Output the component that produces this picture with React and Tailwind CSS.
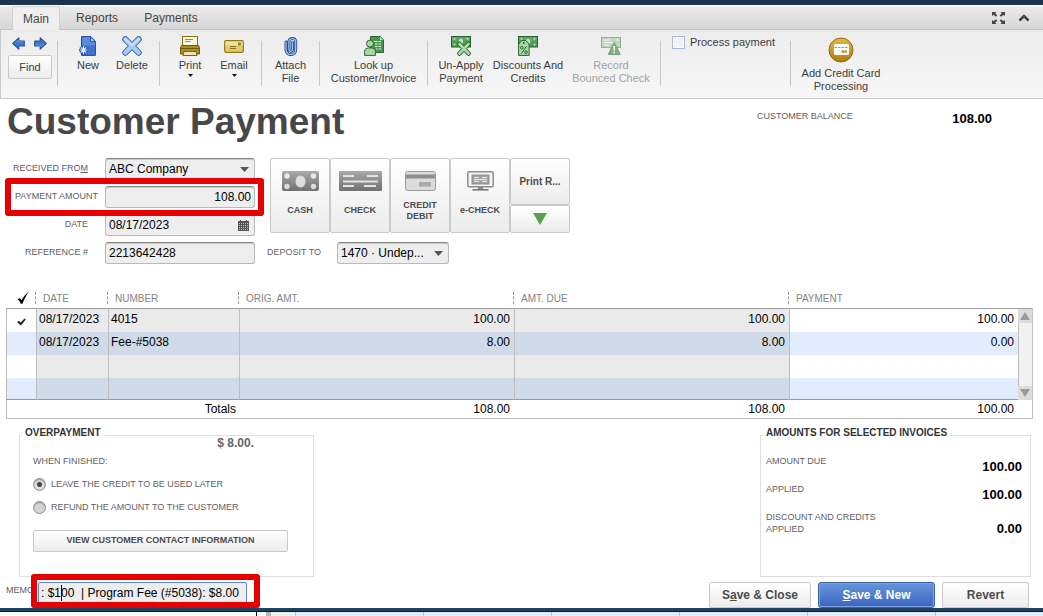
import React, { useState } from 'react';

const Divider = () => <div className="w-px h-[45px] mt-[11px] bg-[#c6c6c6] shrink-0"></div>;

const ToolButton = ({ icon, lines, width, caret, disabled }) => (
    <button
        disabled={disabled}
        className={`${width} shrink-0 flex flex-col items-center pt-[6px] text-[11px] leading-[13px] ${disabled ? 'text-[#a3a3a3]' : 'text-[#3c3c3c]'}`}
    >
        <span className="h-5 mb-[3px] flex items-center justify-center">{icon}</span>
        {lines.map((line) => (
            <span key={line} className="whitespace-nowrap">{line}</span>
        ))}
        {caret && (
            <svg width="5" height="3" viewBox="0 0 5 3" className="mt-[2px]">
                <path d="M0 0h5L2.500 3z" fill="#111" />
            </svg>
        )}
    </button>
);

const ArrowIcon = ({ flip }) => (
    <svg width="13" height="13" viewBox="0 0 13 13" className={flip ? 'rotate-180' : ''}>
        <path d="M.8 6.500 6.800.9V4H12.300v5H6.800v3.100z" fill="#4178cf" stroke="#2550a0" strokeWidth="1.100" strokeLinejoin="round" />
        <path d="M2.600 6.200 6 3v2h5.500" fill="none" stroke="#6c9be0" strokeWidth=".8" />
    </svg>
);

const NewIcon = () => (
    <svg width="18" height="20" viewBox="0 0 18 20">
        <path d="M2.500.6h9.200l4.700 4.600v14.200H2.500z" fill="#3f74cf" stroke="#234a98" strokeLinejoin="round" />
        <path d="M3.300 1.300h8v4.500h4.500v3.700H3.300z" fill="#5a8cdb" />
        <path d="M11.500.8v4.700h4.700z" fill="#a9c8f4" stroke="#234a98" strokeWidth=".8" />
        <path d="M4.500 9.500v9M0 14h9M1.400 10.900l6.200 6.200M7.600 10.900l-6.200 6.200" stroke="#2b55a5" strokeWidth="2.400" />
        <path d="M4.500 10v8M.6 14h7.800M1.800 11.300l5.400 5.400M7.200 11.300l-5.400 5.400" stroke="#e3f0ff" strokeWidth="1.200" />
    </svg>
);

const DeleteIcon = () => (
    <svg width="20" height="20" viewBox="0 0 20 20">
        <path d="M3.400 3.400l13.200 13.200M16.600 3.400 3.400 16.600" stroke="#2f5aa8" strokeWidth="6.200" strokeLinecap="round" />
        <path d="M3.400 3.400l13.200 13.200M16.600 3.400 3.400 16.600" stroke="#a9cbf6" strokeWidth="4.400" strokeLinecap="round" />
        <path d="M3.300 3.300 10 9.200l6.700-5.900" fill="none" stroke="#cfe2fb" strokeWidth="1.600" strokeLinecap="round" />
    </svg>
);

const PrintIcon = () => (
    <svg width="20" height="20" viewBox="0 0 20 20">
        <rect x="2.500" y=".5" width="15" height="10" fill="#faf6e0" stroke="#877016" />
        <path d="M5 3.500h8M5 5.500h5.500" stroke="#a18a38" />
        <path d="M1.500 9.500h17l1 2v6.500H.5v-6.500z" fill="#a88f26" stroke="#6f5a0b" />
        <path d="M1 12.500h18" stroke="#6f5a0b" />
        <path d="M4 15.500h12l1 4H3z" fill="#f1e4a4" stroke="#7b650f" />
    </svg>
);

const EmailIcon = () => (
    <svg width="20" height="13" viewBox="0 0 20 13">
        <rect x=".7" y=".7" width="18.600" height="11.600" rx="1.200" fill="#e2ca72" stroke="#957814" strokeWidth="1.200" />
        <path d="M1.500 1.500h17v4h-17z" fill="#f1e1a0" />
        <rect x="14" y="2.500" width="3" height="3" fill="#9c7f1b" />
        <path d="M6 6.500h6M6 8.500h6" stroke="#8a6f17" />
    </svg>
);

const clipPath = 'M2 6v7.800a4.700 4.700 0 0 0 9.700 0V5a3.600 3.600 0 0 0-6.800 0v8.500a1.700 1.700 0 0 0 3.500 0V6.500';

const ClipIcon = () => (
    <svg width="14" height="20" viewBox="0 0 14 20" fill="none" strokeLinecap="round">
        <path d={clipPath} stroke="#24498f" strokeWidth="3" />
        <path d={clipPath} stroke="#9cc0f3" strokeWidth="1.300" />
    </svg>
);

const LookupIcon = () => (
    <svg width="20" height="20" viewBox="0 0 20 20">
        <path d="M6.500.5h9.800l3.200 3.200v12.800h-13z" fill="#4d9453" stroke="#2b6731" />
        <path d="M16 .8v3.200h3.200z" fill="#c7e8c4" />
        <path d="M10 5.500h7M11 8h6M11 10.500h6M12 13h5" stroke="#d9f1d5" strokeWidth="1.200" />
        <path d="M14 4.500v10" stroke="#4d9453" strokeWidth=".8" />
        <path d="M.6 19.400v-4.200c0-2.400 2-3.300 5.400-3.300s5.400.9 5.400 3.300v4.200z" fill="#a8d9a2" stroke="#2b6731" />
        <circle cx="6" cy="7.600" r="3.500" fill="#a8d9a2" stroke="#2b6731" />
    </svg>
);

const CashNote = () => (
    <g>
        <rect x=".5" y=".5" width="19" height="10.500" fill="#4f9a55" stroke="#28612e" />
        <path d="M1 1h18v4H1z" fill="#5fa563" />
        <circle cx="3.500" cy="3" r="1" fill="#bfe2bb" />
        <circle cx="16.500" cy="3" r="1" fill="#bfe2bb" />
        <circle cx="3.500" cy="8.600" r="1" fill="#bfe2bb" />
        <circle cx="16.500" cy="8.600" r="1" fill="#bfe2bb" />
        <ellipse cx="10" cy="5.500" rx="2.200" ry="2.800" fill="#bfe2bb" />
    </g>
);

const UnapplyIcon = () => (
    <svg width="20" height="20" viewBox="0 0 20 20">
        <CashNote />
        <path d="M8.500 8l9 9.500M17.500 8l-9 9.500" stroke="#2b6731" strokeWidth="4.600" strokeLinecap="round" />
        <path d="M8.500 8l9 9.500M17.500 8l-9 9.500" stroke="#a8dca2" strokeWidth="2.800" strokeLinecap="round" />
    </svg>
);

const DiscountIcon = () => (
    <svg width="20" height="20" viewBox="0 0 20 20">
        <CashNote />
        <path d="M.6 8.200 3.600 4.500h4.300l3.200 3.700v11.200H.6z" fill="#aadba4" stroke="#28612e" />
        <circle cx="5.800" cy="7" r="1" fill="#28612e" />
        <path d="M8.500 10.300l-5.300 7.400" stroke="#28612e" />
        <circle cx="3.800" cy="11.700" r="1.300" fill="none" stroke="#28612e" />
        <circle cx="8" cy="16.200" r="1.300" fill="none" stroke="#28612e" />
    </svg>
);

const BouncedIcon = () => (
    <svg width="20" height="20" viewBox="0 0 20 20">
        <rect x=".5" y="1.500" width="19" height="10" fill="#bfdabb" stroke="#8fb38e" />
        <path d="M2.500 4h6M2.500 6.500h10M2.500 9h5M15 4h3" stroke="#f1f8ef" />
        <path d="M13.200 6.200 19.300 18.500H7.200z" fill="#86b084" stroke="#7aa27a" strokeLinejoin="round" />
        <path d="M13.200 10v4.500M13.200 15.500v1.700" stroke="#eff7ed" strokeWidth="1.600" />
    </svg>
);

const CardCircleIcon = () => (
    <svg width="26" height="26" viewBox="0 0 26 26">
        <defs>
            <linearGradient id="gold" x1="0" y1="0" x2="0" y2="1">
                <stop offset="0" stopColor="#e5b83a" />
                <stop offset="1" stopColor="#b07d0c" />
            </linearGradient>
        </defs>
        <circle cx="13" cy="13" r="12" fill="url(#gold)" stroke="#8d6a1c" />
        <rect x="6" y="7" width="15" height="11" rx="1.500" fill="#fff" />
        <path d="M6.500 10.500h14" stroke="#c8971f" strokeDasharray="2.500 1" />
        <circle cx="14.800" cy="14.500" r="1.500" fill="#c8971f" />
        <circle cx="17.700" cy="14.500" r="1.500" fill="#c8971f" />
    </svg>
);

const GrayGradient = () => (
    <defs>
        <linearGradient id="gray" x1="0" y1="0" x2="0" y2="1">
            <stop offset="0" stopColor="#a9a9a9" />
            <stop offset="1" stopColor="#717171" />
        </linearGradient>
    </defs>
);

const CashIcon = () => (
    <svg width="37" height="20" viewBox="0 0 37 20">
        <GrayGradient />
        <rect width="37" height="20" rx="2" fill="url(#gray)" />
        <ellipse cx="18.500" cy="10.500" rx="5" ry="6" fill="#dedede" />
        <circle cx="5" cy="5" r="2.700" fill="#e9e9e9" />
        <circle cx="31.500" cy="5" r="2.700" fill="#e9e9e9" />
        <circle cx="5" cy="15.500" r="2.700" fill="#dcdcdc" />
        <circle cx="31.500" cy="15.500" r="2.700" fill="#dcdcdc" />
    </svg>
);

const CheckIcon = () => (
    <svg width="43" height="20" viewBox="0 0 43 20">
        <rect width="43" height="20" rx="1" fill="url(#gray)" />
        <path d="M4 5h11M28 5h11M4 15h11M25 15h12" stroke="#e3e3e3" strokeWidth="2" />
        <path d="M4 10.500h35" stroke="#e3e3e3" strokeWidth="2" />
    </svg>
);

const CreditIcon = () => (
    <svg width="31" height="20" viewBox="0 0 31 20">
        <rect x=".5" y=".5" width="30" height="19" rx="2" fill="#dcdcdc" stroke="#9b9b9b" />
        <path d="M1 3.500h29v4H1z" fill="#8e8e8e" />
        <rect x="14" y="11" width="12" height="4.500" fill="#a9a9a9" />
    </svg>
);

const MonitorIcon = () => (
    <svg width="27" height="20" viewBox="0 0 27 20">
        <rect x=".8" y=".8" width="25.400" height="15" rx="1.500" fill="#f6f6f6" stroke="#8c8c8c" strokeWidth="1.500" />
        <rect x="5" y="4" width="17" height="9" fill="#a2a2a2" stroke="#8d8d8d" />
        <path d="M7 6.500h5M15 6.500h5M7 8.500h13M7 10.500h5M15 10.500h5" stroke="#ededed" />
        <path d="M11 16h5v2h-5z" fill="#8c8c8c" />
        <path d="M5.500 18.800h16" stroke="#777" strokeWidth="1.600" />
    </svg>
);

const CalendarIcon = () => (
    <svg width="11" height="11" viewBox="0 0 11 11" className="absolute right-[6px] top-[6px] pointer-events-none">
        <path d="M0 1h11v10H0z" fill="#555" />
        <path d="M2.500 0v2M8.500 0v2" stroke="#555" />
        <path d="M1 3.500h9M1 5.500h9M1 7.500h9M1 9.500h9" stroke="#bbb" strokeDasharray="1 1" />
    </svg>
);

const DropArrow = () => (
    <svg width="9" height="5" viewBox="0 0 9 5" className="absolute right-[6px] top-[9px] pointer-events-none">
        <path d="M0 0h9L4.500 5z" fill="#555" />
    </svg>
);

const HighlightBox = ({ className }) => (
    <span className={`absolute z-10 border-6 border-[#e60000] rounded-[3px] pointer-events-none ${className}`}></span>
);

const fieldClass = 'block w-full h-[22px] px-[3px] text-[12px] leading-[16px] text-black bg-[#eeeeee] border border-[#b9b9b9] border-t-[#868686] rounded-[3px] shadow-[inset_0_1px_0_#c9c9c9] appearance-none outline-none';
const labelClass = 'text-[9px] leading-[12px] text-[#5f5f5f] whitespace-nowrap';
const grayButton = 'border border-[#c9c9c9] rounded-[2px] bg-linear-to-b from-white to-[#ececec]';

const FormRow = ({ id, label, labelPad = 'pr-[10px]', children }) => (
    <div className="relative flex gap-[7px]">
        <label htmlFor={id} className={`${labelClass} ${labelPad} w-[98px] pt-1 text-right`}>{label}</label>
        <div className="relative flex-1">{children}</div>
    </div>
);

const methods = [
    { icon: <CashIcon />, lines: ['CASH'], pad: 'pt-[8px]' },
    { icon: <CheckIcon />, lines: ['CHECK'], pad: 'pt-[8px]' },
    { icon: <CreditIcon />, lines: ['CREDIT', 'DEBIT'], pad: 'pt-[3px]' },
    { icon: <MonitorIcon />, lines: ['e-CHECK'], pad: 'pt-[8px]' },
];

const invoices = [
    { checked: true, date: '08/17/2023', number: '4015', orig: '100.00', due: '100.00', payment: '100.00' },
    { checked: false, date: '08/17/2023', number: 'Fee-#5038', orig: '8.00', due: '8.00', payment: '0.00' },
    { checked: false, date: '', number: '', orig: '', due: '', payment: '' },
    { checked: false, date: '', number: '', orig: '', due: '', payment: '' },
];

const HeaderCell = ({ children }) => (
    <th scope="col" className="p-0 text-left font-normal">
        <div className="-ml-[2px] h-3 pl-[7px] border-l border-dashed border-[#999]">{children}</div>
    </th>
);

const InvoiceTable = () => (
    <table className="w-full table-fixed border-separate border-spacing-0 text-[12px] leading-[16px] text-black">
        <colgroup>
            <col className="w-[31px]" />
            <col className="w-[72px]" />
            <col className="w-[131px]" />
            <col />
            <col />
            <col className="w-[228px]" />
            <col className="w-[15px]" />
        </colgroup>
        <thead>
            <tr className="h-[20px] text-[10px] leading-[14px] text-[#858585]">
                <th scope="col" aria-label="Selected" className="p-0 pl-[3px]">
                    <svg width="12" height="12" viewBox="0 0 12 12" className="block mx-auto">
                        <path d="M.6 7.400 2.800 6l1.800 2.300C6.300 4.800 8.300 2.300 11.300.2 9 4 7 7.500 5.500 11.800H3.800C3.200 9.800 2.200 8.300.6 7.400z" fill="#000" />
                    </svg>
                </th>
                <HeaderCell>DATE</HeaderCell>
                <HeaderCell>NUMBER</HeaderCell>
                <HeaderCell>ORIG. AMT.</HeaderCell>
                <HeaderCell>AMT. DUE</HeaderCell>
                <HeaderCell>PAYMENT</HeaderCell>
                <td></td>
            </tr>
        </thead>
        <tbody>
            {invoices.map((row, i) => {
                const last = i === invoices.length - 1;
                const light = i % 2 ? 'bg-[#e1edfe]' : 'bg-white';
                const dark = i % 2 ? 'bg-[#cfdbe9]' : 'bg-[#eaeaea]';
                const top = i === 0 ? 'border-t border-t-[#a0a0a0]' : '';
                const bottom = last ? 'border-b border-b-[#999]' : '';
                const edge = `${top} ${bottom}`;
                const locked = `${dark} ${edge} border-r border-r-[#bdbdbd] p-0 pb-1`;
                return (
                    <tr key={i} className={i === 0 ? 'h-6' : last ? 'h-[22px]' : 'h-[23px]'}>
                        <td className={`${light} ${edge} border-l border-r border-l-[#bdbdbd] border-r-[#bdbdbd] p-0 pt-[3px]`}>
                            {row.checked && (
                                <svg width="9" height="8" viewBox="0 0 9 8" className="block mx-auto">
                                    <path d="M.2 4.200 1.900 2.800l1.800 1.700L7.600.4l1.200 1.200L3.900 7.400z" fill="#222" />
                                </svg>
                            )}
                        </td>
                        <td className={`${locked} pl-[2px]`}>{row.date}</td>
                        <td className={`${locked} pl-[2px]`}>{row.number}</td>
                        <td className={`${locked} pr-1 text-right`}>{row.orig}</td>
                        <td className={`${locked} pr-1 text-right`}>{row.due}</td>
                        <td className={`${light} ${edge} p-0 pb-1 pr-1 text-right`}>{row.payment}</td>
                        {i === 0 && (
                            <td rowSpan={4} className="h-px p-0 bg-[#f1f1f1] border-t border-t-[#a0a0a0] border-r border-r-[#c4c4c4]">
                                <div className="h-full min-h-[91px] flex flex-col justify-between">
                                    <button aria-label="Scroll up" className="w-full h-[14px] flex items-center justify-center bg-[#dcdcdc]">
                                        <svg width="10" height="8" viewBox="0 0 10 8"><path d="M5 0l5 8H0z" fill="#9b9b9b" /></svg>
                                    </button>
                                    <div className="flex-1 border-l border-[#bdbdbd]"></div>
                                    <button aria-label="Scroll down" className="w-full h-[14px] flex items-center justify-center bg-[#dcdcdc]">
                                        <svg width="10" height="8" viewBox="0 0 10 8"><path d="M5 8l5-8H0z" fill="#9b9b9b" /></svg>
                                    </button>
                                </div>
                            </td>
                        )}
                    </tr>
                );
            })}
        </tbody>
        <tfoot>
            <tr className="h-[19px]">
                <th scope="row" colSpan={3} className="p-0 pr-1 text-right font-normal border-l border-b border-[#bdbdbd]">Totals</th>
                <td className="p-0 pr-[5px] text-right border-b border-[#bdbdbd]">108.00</td>
                <td className="p-0 pr-[5px] text-right border-b border-[#bdbdbd]">108.00</td>
                <td className="p-0 pr-1 text-right border-b border-[#bdbdbd]">100.00</td>
                <td className="p-0 border-b border-r border-[#bdbdbd]"></td>
            </tr>
        </tfoot>
    </table>
);

const Toolbar = () => (
    <div className="flex h-[69px] border-b border-l border-[#cacaca] bg-linear-to-b from-[#ececec] to-[#f7f7f7]">
        <div className="w-[56px] shrink-0 pt-[7px] pl-[7px]">
            <div className="flex gap-[9px] pl-1">
                <button aria-label="Previous"><ArrowIcon /></button>
                <button aria-label="Next"><ArrowIcon flip /></button>
            </div>
            <button className={`${grayButton} mt-[5px] w-[44px] h-6 text-[11px] text-[#3c3c3c]`}>Find</button>
        </div>
        <Divider />
        <div className="flex pl-2 pr-[5px]">
            <ToolButton width="w-[44px]" icon={<NewIcon />} lines={['New']} />
            <ToolButton width="w-[44px]" icon={<DeleteIcon />} lines={['Delete']} />
        </div>
        <Divider />
        <div className="flex pl-2 pr-[5px]">
            <ToolButton width="w-[44px]" icon={<PrintIcon />} lines={['Print']} caret />
            <ToolButton width="w-[44px]" icon={<EmailIcon />} lines={['Email']} caret />
        </div>
        <Divider />
        <ToolButton width="w-[57px]" icon={<ClipIcon />} lines={['Attach', 'File']} />
        <Divider />
        <ToolButton width="w-[107px]" icon={<LookupIcon />} lines={['Look up', 'Customer/Invoice']} />
        <Divider />
        <div className="flex px-[3px]">
            <ToolButton width="w-[60px]" icon={<UnapplyIcon />} lines={['Un-Apply', 'Payment']} />
            <ToolButton width="w-[74px]" icon={<DiscountIcon />} lines={['Discounts And', 'Credits']} />
            <ToolButton width="w-[92px]" icon={<BouncedIcon />} lines={['Record', 'Bounced Check']} disabled />
        </div>
        <Divider />
        <label className="w-[129px] shrink-0 flex items-start gap-[5px] pl-[11px] pt-[6px] text-[11px] leading-[13px] text-[#3c3c3c] whitespace-nowrap">
            <input type="checkbox" className="appearance-none w-[13px] h-[13px] border border-[#a9b7e0] bg-[#f1f1fb] shadow-[inset_0_0_0_1px_#ffffff]" />
            Process payment
        </label>
        <Divider />
        <button className="w-[100px] flex flex-col items-center pt-[7px] text-[11px] leading-[13px] text-[#3c3c3c]">
            <CardCircleIcon />
            <span className="mt-1 whitespace-nowrap">Add Credit Card</span>
            <span>Processing</span>
        </button>
    </div>
);

const TabBar = () => (
    <div className="flex items-stretch h-[25px] pl-[12px] pr-[13px] border-t border-t-white border-b border-b-[#bcc6cf] bg-linear-to-b from-[#ececec] to-[#d6d6d6] text-[12px] text-[#444]">
        <button className="-mb-px w-[48px] border border-b-0 border-[#cfcfcf] rounded-t-[3px] bg-[#efefef]">Main</button>
        <button className="w-[74px]">Reports</button>
        <button className="w-[74px]">Payments</button>
        <div className="ml-auto flex items-center gap-[13px]">
            <button aria-label="Expand">
                <svg width="13" height="12" viewBox="0 0 13 12" className="block">
                    <path d="M0 0h4.500L3.200 1.300 5.300 3.400 3.900 4.800 1.500 2.700 0 4zM13 0v4l-1.500-1.300-2.400 2.100-1.400-1.400 2.100-2.100L8.500 0zM0 12V8l1.500 1.300 2.400-2.100 1.400 1.400-2.100 2.100L4.500 12zM13 12H8.500l1.300-1.300-2.100-2.100 1.400-1.400 2.400 2.100L13 8z" fill="#444" />
                </svg>
            </button>
            <button aria-label="Collapse">
                <svg width="12" height="8" viewBox="0 0 12 8" className="block">
                    <path d="M1.500 6.500 6 2l4.500 4.500" fill="none" stroke="#444" strokeWidth="2.500" />
                </svg>
            </button>
        </div>
    </div>
);

const AmountLine = ({ label, value, valuePad = 'pt-[5px]' }) => (
    <div className="flex items-start justify-between h-6">
        <span className={`${labelClass} whitespace-pre-line`}>{label}</span>
        <span className={`${valuePad} text-[13px] leading-[14px] font-bold text-black`}>{value}</span>
    </div>
);

const radioClass = 'appearance-none w-[13px] h-[13px] rounded-full border border-[#8f8f8f] bg-[#d4d4d4] shadow-[inset_0_1px_1px_#9a9a9a] checked:bg-[radial-gradient(circle,#444_0_2px,#dcdcdc_3px)]';
const legendClass = 'ml-[2px] px-[3px] pb-1 text-[10px] leading-[12px] font-bold text-[#333]';

const App = () => {
    const [memo, setMemo] = useState(': $100  | Program Fee (#5038): $8.00');

    return (
        <div className="bg-white font-['Liberation_Sans',Arial,sans-serif]">
            <div className="h-[5px] bg-[#1b344e]"></div>
            <TabBar />
            <Toolbar />

            <div className="flex justify-between pt-px pl-[7px] pr-[51px] h-[59px]">
                <h1 className="text-[37px] leading-[44px] font-bold text-[#484848] whitespace-nowrap">Customer Payment</h1>
                <div className="w-[235px] flex justify-between items-start">
                    <span className={`${labelClass} pt-[10px]`}>CUSTOMER BALANCE</span>
                    <span className="pt-[11px] text-[13px] leading-[16px] font-bold text-black">108.00</span>
                </div>
            </div>

            <div className="flex gap-[12px]">
                <div className="w-[255px] flex flex-col gap-[6px]">
                    <FormRow id="from" label={<>RECEIVED FRO<u>M</u></>}>
                        <select id="from" className={fieldClass}>
                            <option>ABC Company</option>
                        </select>
                        <DropArrow />
                    </FormRow>
                    <FormRow id="amount" labelPad="" label="PAYMENT AMOUNT">
                        <input id="amount" defaultValue="108.00" className={`${fieldClass} text-right`} />
                        <HighlightBox className="left-[-100px] right-[-9px] -top-2 -bottom-2" />
                    </FormRow>
                    <FormRow id="date" label="DATE">
                        <input id="date" defaultValue="08/17/2023" className={fieldClass} />
                        <CalendarIcon />
                    </FormRow>
                    <FormRow id="reference" label="REFERENCE #">
                        <input id="reference" defaultValue="2213642428" className={fieldClass} />
                    </FormRow>
                </div>

                <div>
                    <div className="flex h-[75px] ml-[3px]">
                        {methods.map((m) => (
                            <button key={m.lines[0]} className={`${grayButton} w-[60px] pt-[12px] flex flex-col items-center text-[9px] leading-[11px] font-bold text-[#4c4c4c]`}>
                                <span className="h-[22px]">{m.icon}</span>
                                <span className={`${m.pad} mt-[4px] flex flex-col`}>
                                    {m.lines.map((line) => <span key={line}>{line}</span>)}
                                </span>
                            </button>
                        ))}
                        <div className="w-[60px] flex flex-col">
                            <button className={`${grayButton} flex-1 text-[10px] font-bold text-[#4c4c4c]`}>Print R...</button>
                            <button aria-label="More payment types" className={`${grayButton} h-[28px] flex items-center justify-center`}>
                                <svg width="14" height="12" viewBox="0 0 14 12"><path d="M0 0h14L7 12z" fill="#57a14e" /></svg>
                            </button>
                        </div>
                    </div>
                    <div className="flex gap-[14px] mt-[9px]">
                        <label htmlFor="deposit" className={`${labelClass} pt-1 w-[56px]`}>DEPOSIT TO</label>
                        <div className="relative w-[112px]">
                            <select id="deposit" className={fieldClass}>
                                <option>1470 · Undep...</option>
                            </select>
                            <DropArrow />
                        </div>
                    </div>
                </div>
            </div>

            <div className="mt-6 pl-[6px] pr-[10px]">
                <InvoiceTable />
            </div>

            <div className="flex justify-between items-stretch mt-[8px] pl-[19px] pr-[12px]">
                <fieldset className="w-[295px] border border-[#dedede]">
                    <legend className={legendClass}>OVERPAYMENT</legend>
                    <div className="-mt-2 pl-[13px] pr-[25px] pb-6">
                        <div className="pr-[34px] text-right text-[12px] leading-[16px] font-bold text-[#666]">$ 8.00.</div>
                        <div className={`${labelClass} mt-1`}>WHEN FINISHED:</div>
                        <label className={`${labelClass} mt-[9px] h-4 flex items-center gap-[5px]`}>
                            <input type="radio" name="overpayment" defaultChecked className={radioClass} />
                            LEAVE THE CREDIT TO BE USED LATER
                        </label>
                        <label className={`${labelClass} mt-[7px] h-4 flex items-center gap-[5px]`}>
                            <input type="radio" name="overpayment" className={radioClass} />
                            REFUND THE AMOUNT TO THE CUSTOMER
                        </label>
                        <button className={`${grayButton} mt-[15px] w-full h-[22px] text-[9px] font-bold text-[#4c4c4c]`}>VIEW CUSTOMER CONTACT INFORMATION</button>
                    </div>
                </fieldset>

                <fieldset className="w-[271px] border border-[#dedede]">
                    <legend className={legendClass}>AMOUNTS FOR SELECTED INVOICES</legend>
                    <div className="pl-[5px] pr-[8px] pt-[12px] flex flex-col gap-1">
                        <AmountLine label="AMOUNT DUE" value="100.00" />
                        <AmountLine label="APPLIED" value="100.00" />
                        <AmountLine label={'DISCOUNT AND CREDITS\nAPPLIED'} value="0.00" valuePad="pt-[11px]" />
                    </div>
                </fieldset>
            </div>

            <div className="flex h-[31px] pl-[6px] pr-[14px] pt-[5px]">
                <label htmlFor="memo" className={`${labelClass} w-[32px] pt-[2px]`}>MEMO</label>
                <div className="relative w-[209px] h-6">
                    <input
                        id="memo"
                        value={memo}
                        onChange={(e) => setMemo(e.target.value)}
                        className="block w-full h-6 px-[2px] pb-[2px] text-[12px] leading-[16px] text-black bg-[#eeeeee] border border-[#5b87d6] rounded-[2px] outline-none"
                    />
                    <span className="absolute left-[23px] top-[3px] w-px h-4 bg-black"></span>
                    <HighlightBox className="-left-[7px] -right-[13px] -top-2 -bottom-[2px]" />
                </div>
                <div className="ml-auto flex gap-[7px] text-[12px] font-bold">
                    <button className={`${grayButton} w-[102px] text-[#4c4c4c]`}>S<u>a</u>ve &amp; Close</button>
                    <button className="w-[117px] rounded-[3px] border border-[#3b5fa3] bg-linear-to-b from-[#6795dc] to-[#3c65c0] text-white shadow-[inset_0_0_0_1px_#7ba3e3]"><u>S</u>ave &amp; New</button>
                    <button className={`${grayButton} w-[87px] text-[#4c4c4c]`}>Revert</button>
                </div>
            </div>

            <div className="h-1 bg-[#1f4263] border-b border-[#0c1724]"></div>
            <div className="h-1 flex">
                <div className="w-[257px] border-r border-black"></div>
                <div className="w-[9px]"></div>
                <div className="w-[5px] bg-[#b5b5b5]"></div>
                <div className="w-[25px] bg-[#f0f0f0] border-r border-[#c4c4c4]"></div>
                <div className="flex-1 bg-[repeating-linear-gradient(90deg,#e1edfe_0_127px,#c2c2c2_127px_128px)]"></div>
            </div>
        </div>
    );
};

export default App;
